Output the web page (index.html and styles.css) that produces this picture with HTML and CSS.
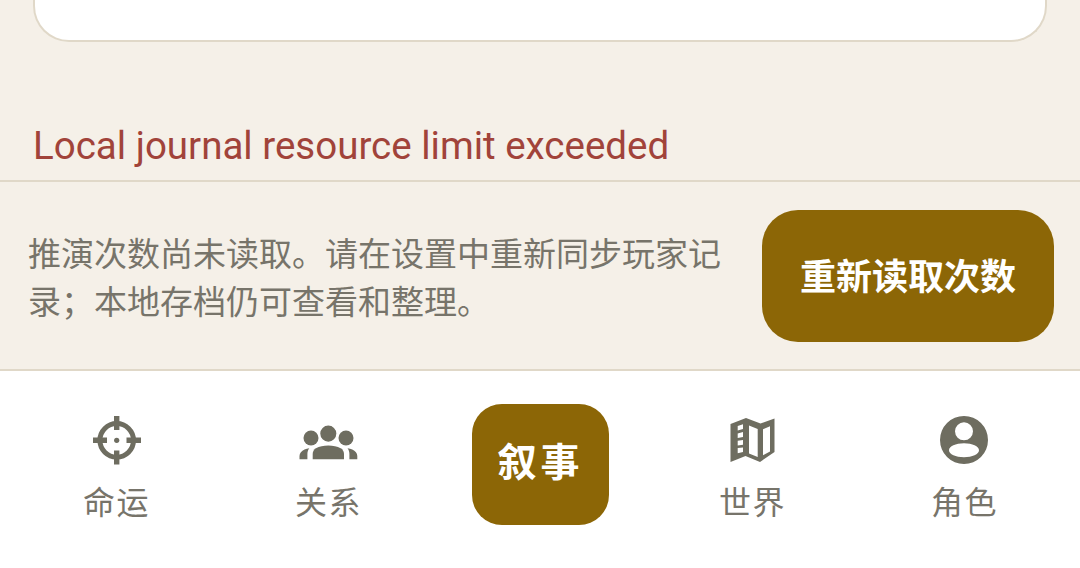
FILE: index.html
```html
<!DOCTYPE html>
<html lang="zh-CN">
<head>
<meta charset="utf-8">
<title>叙事</title>
<link rel="stylesheet" href="styles.css">
</head>
<body>
<div class="page">
  <main class="content">
    <div class="card"></div>
    <p class="error">Local journal resource limit exceeded</p>
  </main>
  <section class="notice">
    <p class="notice-text">推演次数尚未读取。请在设置中重新同步玩家记录；本地存档仍可查看和整理。</p>
    <button class="retry" type="button">重新读取次数</button>
  </section>
  <nav class="tabs">
    <a class="tab">
      <svg class="icon" viewBox="0 0 66 60">
        <circle class="ring" cx="33.7" cy="30.3" r="16.8"/>
        <path d="M31 6h5.4v14H31zM31 40.5h5.4V54.500H31zM10 27.600h14v5.400H10zM43.500 27.600h14.500v5.400H43.500z"/>
        <circle cx="33.7" cy="30.3" r="2.600"/>
      </svg>
      <span>命运</span>
    </a>
    <a class="tab">
      <svg class="icon" viewBox="0 0 66 60">
        <circle cx="16" cy="28" r="7.500"/>
        <circle cx="51" cy="28" r="7.500"/>
        <circle class="cut" cx="33.300" cy="23.600" r="8.800"/>
        <path d="M17.700 49.300H33.300 49V44c0-2.400-1.200-4.600-3.400-5.800-3.300-1.700-7.500-2.700-12.300-2.700s-9 1-12.300 2.700c-2.200 1.200-3.300 3.400-3.300 5.800z"/>
        <path d="M4.500 49.300V46c0-3 2-5.100 5-6.600 1.500-.6 3-1 4.800-1.200-1.300 1.700-1.900 3.700-1.900 5.800v5.300zM62.300 49.300V46c0-3-2-5.100-5-6.600-1.500-.6-3-1-4.800-1.200 1.300 1.700 1.900 3.700 1.900 5.800v5.300z"/>
      </svg>
      <span>关系</span>
    </a>
    <a class="tab tab-active"><span>叙事</span></a>
    <a class="tab">
      <svg class="icon" viewBox="0 0 66 60">
        <path fill-rule="evenodd" d="M11.500 14 27 8l14.500 5.500L55.500 8.500V42l-14.500 10-14.500-6-15 6zM30 15.500v28l8.700 3.500V19zM44 19.200V45.200l7-3.700V16.300zM18.700 16l5.300-1.700v4.700l-5.300 1.600zM18.700 23.400l5.300-1.400v5l-5.300 1zM18.700 30.800l5.300-.8v4.700l-5.300.8zM18.700 38l5.300-.5v4.500l-5.300 1.200z"/>
      </svg>
      <span>世界</span>
    </a>
    <a class="tab">
      <svg class="icon" viewBox="0 0 66 60">
        <path fill-rule="evenodd" d="M33 6a24 24 0 1 1 0 48 24 24 0 0 1 0-48zM33 12.300a9 9 0 1 0 0 18 9 9 0 0 0 0-18zM33 33.300c-8.300 0-15 3.100-15 7s6.700 7 15 7 15-3.100 15-7-6.700-7-15-7z"/>
      </svg>
      <span>角色</span>
    </a>
  </nav>
</div>
</body>
</html>
```
FILE: styles.css
```css
* { box-sizing: border-box; }
html, body { margin: 0; padding: 0; }
body {
  font-family: Roboto, "Noto Sans CJK SC", sans-serif;
  background: #fff;
}
.page {
  width: 1080px;
  height: 568px;
  overflow: hidden;
  display: flex;
  flex-direction: column;
  background: #f5f0e8;
}
.content {
  height: 180px;
  padding: 0 33px;
  flex: none;
}
.card {
  height: 42px;
  background: #fff;
  border: 2px solid #e0d8c8;
  border-top: 0;
  border-radius: 0 0 36px 36px;
}
.error {
  margin: 83px 0 0;
  font-size: 38.5px;
  line-height: 42px;
  color: #a1433a;
}
.notice {
  flex: none;
  height: 191px;
  border-top: 2px solid #e0d8c8;
  border-bottom: 2px solid #e0d8c8;
  padding: 28px 26px 0 28px;
  display: flex;
  align-items: flex-start;
  gap: 40px;
}
.notice-text {
  margin: 21px 0 0;
  flex: 1;
  font-size: 33px;
  line-height: 48px;
  color: #77746a;
}
.retry {
  flex: none;
  width: 292px;
  height: 132px;
  border: 0;
  padding: 0 0 4px;
  border-radius: 36px;
  background: #8c6606;
  color: #fff;
  font-family: inherit;
  font-size: 36px;
  font-weight: 700;
}
.tabs {
  flex: 1;
  background: #fff;
  padding: 0 10px;
  display: grid;
  grid-template-columns: repeat(5, 1fr);
}
.tab {
  display: flex;
  flex-direction: column;
  align-items: center;
  padding-top: 39px;
  gap: 12px;
  color: #77746a;
  font-size: 32px;
  line-height: 42px;
  letter-spacing: 1.500px;
}
.tab span {
  padding-left: 1px;
}
.icon {
  width: 66px;
  height: 60px;
  fill: #6e6d60;
  display: block;
  flex: none;
}
.ring {
  fill: none;
  stroke: #6e6d60;
  stroke-width: 5;
}
.cut {
  stroke: #fff;
  stroke-width: 1.500;
}
.tab-active {
  align-self: start;
  justify-self: center;
  width: 137px;
  height: 121px;
  margin-top: 33px;
  padding: 0 0 4px;
  justify-content: center;
  background: #8c6606;
  border-radius: 30px;
  color: #fff;
  font-size: 39px;
  font-weight: 700;
  letter-spacing: 4px;
}
```
